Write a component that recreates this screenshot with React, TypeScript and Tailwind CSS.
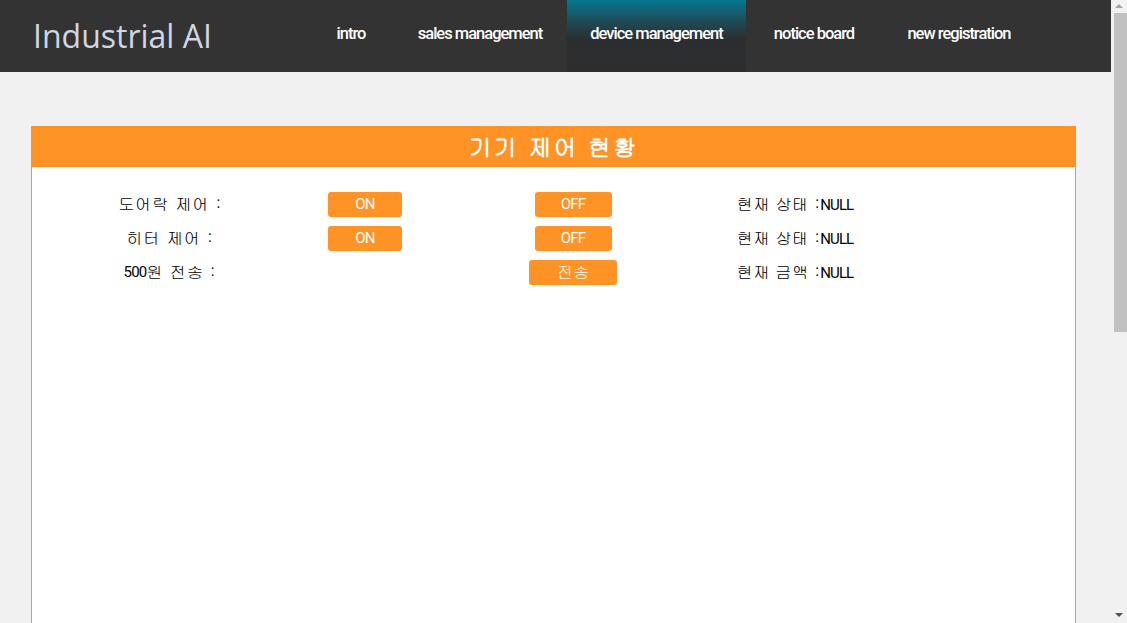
import React from "react";

const cond = "font-['Ubuntu_Condensed','Roboto',sans-serif]";
const kr = "font-['Gulim','Noto_Sans_CJK_KR',sans-serif]";

function Btn({ label, w }: { label: string; w: string }) {
  return (
    <div
      className={`${w} h-[25px] rounded-[3px] bg-[#ff9326] text-white flex items-center justify-center leading-none ${
        label === "전송" ? `${kr} text-[16px]` : `${cond} text-[15px] tracking-[-0.8px]`
      }`}
    >
      {label}
    </div>
  );
}

function Status({ k }: { k: string }) {
  return (
    <div className="flex items-baseline text-[16px] text-black whitespace-nowrap">
      <span className={`${kr} tracking-[0.5px]`}>{k} :</span>
      <span className={`${cond} text-[15px] tracking-[-0.9px]`}>NULL</span>
    </div>
  );
}

const nav: { n: string; w: string; active?: boolean }[] = [
  { n: "intro", w: "w-[84px]" },
  { n: "sales management", w: "w-[174px]" },
  { n: "device management", w: "w-[179px]", active: true },
  { n: "notice board", w: "w-[136px]" },
  { n: "new registration", w: "w-[154px]" },
];

export default function App() {
  return (
    <div className="w-[1127px] h-[623px] overflow-hidden flex bg-[#f1f1f1]">
      <div className="w-[1111px] flex flex-col">
        <header className="h-[72px] shrink-0 bg-[#333333] flex items-stretch">
          <div className="w-[309px] shrink-0 pl-[33px] flex items-center">
            <span className="font-['Open_Sans',sans-serif] text-[32px] text-[#d0d7e2] tracking-[0px] whitespace-nowrap">Industrial AI</span>
          </div>
          <nav className="flex items-stretch">
            {nav.map(({ n, w, active }) => (
              <div
                key={n}
                className={`${w} shrink-0 whitespace-nowrap flex items-center justify-center pb-[3px] text-white font-medium text-[16.5px] tracking-[-1px] ${cond} ${
                  active ? "bg-[linear-gradient(to_bottom,#05788f_0%,#1f4a55_30%,#2b2e30_55%,#2d2d2d_100%)]" : ""
                }`}
              >
                {n}
              </div>
            ))}
          </nav>
        </header>
        <div className="pt-[54px] pl-[31px]">
          <div className="w-[1045px] h-[600px] border border-[#ff9326] border-t-0 bg-white">
            <div className={`h-[41px] bg-[#ff9326] -mx-px flex items-center justify-center text-white text-[23px] font-bold tracking-[2px] ${kr}`}>
              기기 제어 현황
            </div>
            <div className="pt-[20px] grid grid-cols-[276px_114px_302px_142px] auto-rows-[34px]">
              <div className={`flex items-center justify-center text-[16px] ${kr} tracking-[1px]`}>도어락 제어 :</div>
              <div className="flex items-center justify-center"><Btn label="ON" w="w-[74px]" /></div>
              <div className="flex items-center justify-center"><Btn label="OFF" w="w-[77px]" /></div>
              <div className="flex items-center justify-center"><Status k="현재 상태" /></div>

              <div className={`flex items-center justify-center text-[16px] ${kr} tracking-[1px]`}>히터 제어 :</div>
              <div className="flex items-center justify-center"><Btn label="ON" w="w-[74px]" /></div>
              <div className="flex items-center justify-center"><Btn label="OFF" w="w-[77px]" /></div>
              <div className="flex items-center justify-center"><Status k="현재 상태" /></div>

              <div className={`flex items-center justify-center text-[16px] ${kr} tracking-[1px]`}>
                <span className={`${cond} text-[15px] tracking-[-0.8px]`}>500</span>원 전송 :
              </div>
              <div />
              <div className="flex items-center justify-center"><Btn label="전송" w="w-[88px]" /></div>
              <div className="flex items-center justify-center"><Status k="현재 금액" /></div>
            </div>
          </div>
        </div>
      </div>
      <div className="w-[16px] bg-[#f1f1f1] flex flex-col items-center">
        <svg width="16" height="13" viewBox="0 0 16 13" className="shrink-0">
          <polygon points="4,8 8,4 12,8" fill="#a3a3a3" />
        </svg>
        <div className="w-[13px] h-[319px] bg-[#c1c1c1] ml-[2px]" />
        <div className="flex-1" />
        <svg width="16" height="13" viewBox="0 0 16 13" className="shrink-0 mb-[1px]">
          <polygon points="4,4 12,4 8,8" fill="#505050" />
        </svg>
      </div>
    </div>
  );
}
